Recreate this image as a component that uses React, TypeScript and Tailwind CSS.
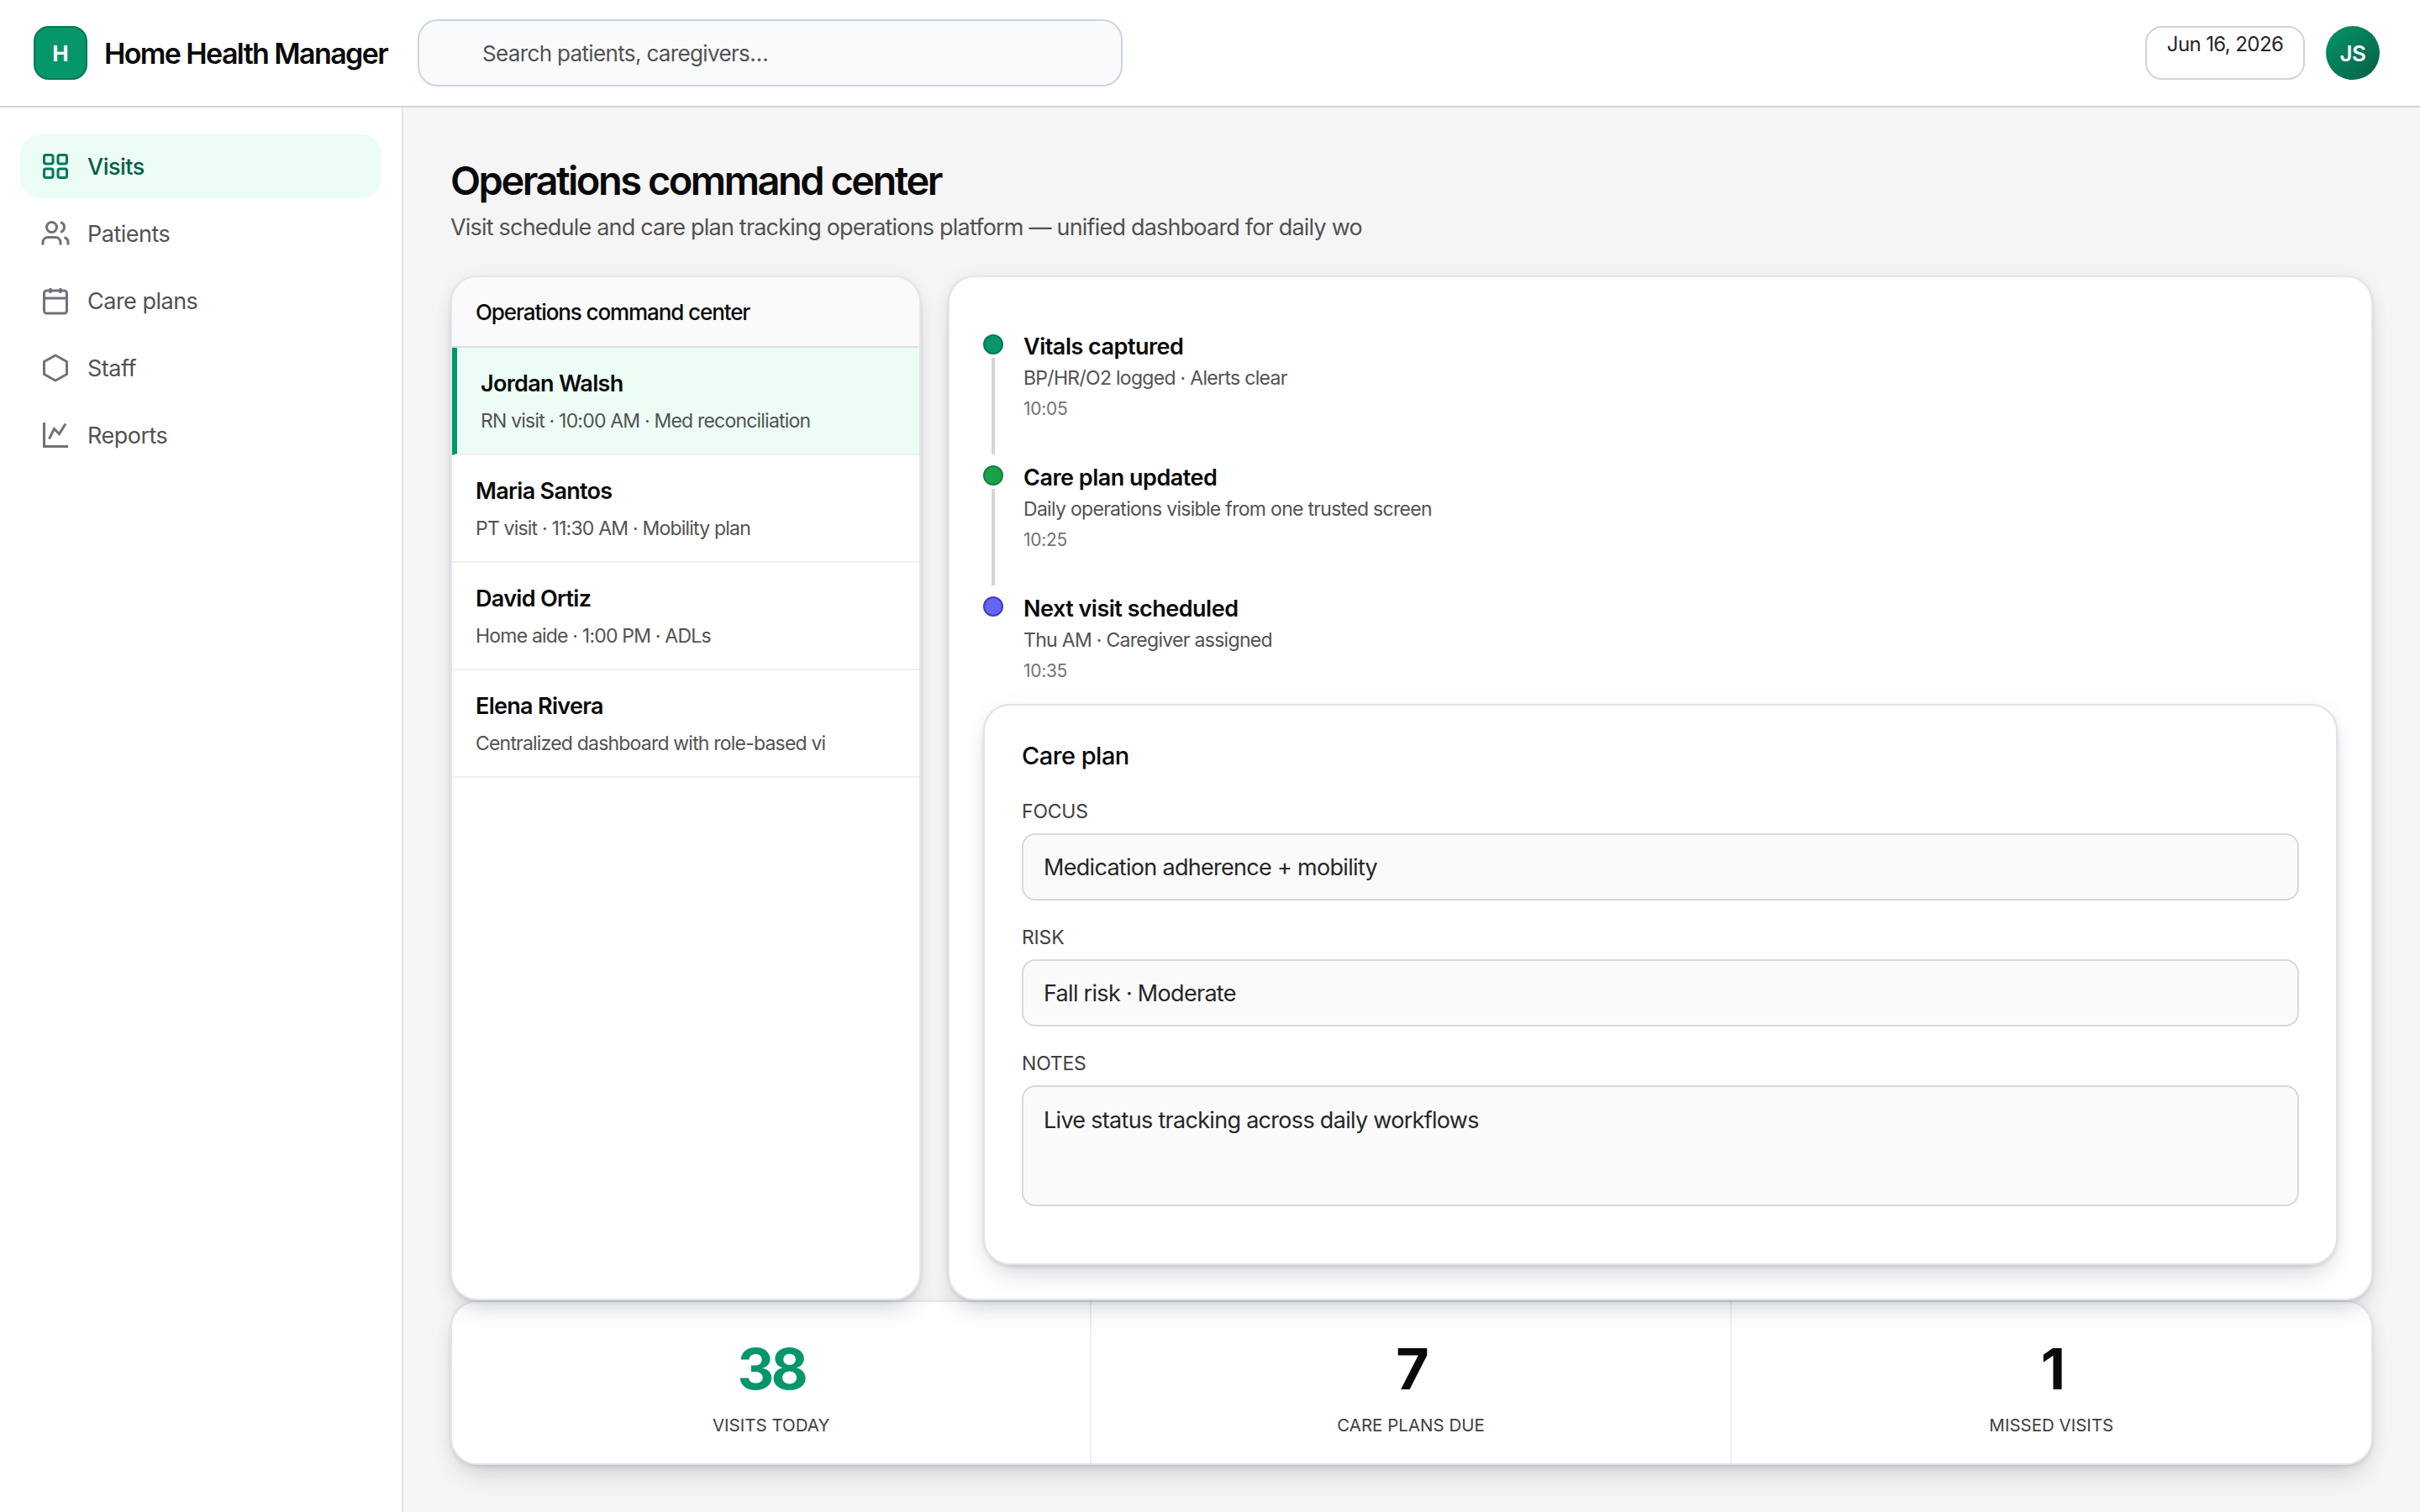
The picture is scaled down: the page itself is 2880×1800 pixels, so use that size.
import { Users, Calendar } from "lucide-react";

function GridIcon({ className }: { className?: string }) {
  return (
    <svg width="36" height="36" viewBox="0 0 24 24" fill="none" stroke="currentColor" strokeWidth="2" className={className}>
      <rect x="3" y="3" width="7" height="7" rx="1.5" />
      <rect x="14" y="3" width="7" height="7" rx="1.5" />
      <rect x="3" y="14" width="7" height="7" rx="1.5" />
      <rect x="14" y="14" width="7" height="7" rx="1.5" />
    </svg>
  );
}

function HexIcon({ className }: { className?: string }) {
  return (
    <svg width="36" height="36" viewBox="0 0 24 24" fill="none" stroke="currentColor" strokeWidth="2" strokeLinejoin="round" className={className}>
      <polygon points="12,2 21,7 21,17 12,22 3,17 3,7" />
    </svg>
  );
}

function ChartIcon({ className }: { className?: string }) {
  return (
    <svg width="36" height="36" viewBox="0 0 24 24" fill="none" stroke="currentColor" strokeWidth="2" className={className}>
      <path d="M3 2v19h19" />
      <path d="M7 15l4-8 4 4 5-8" />
    </svg>
  );
}

function UsersIcon({ className }: { className?: string }) {
  return <Users size={36} strokeWidth={2} strokeLinecap="butt" className={className} />;
}

function CalIcon({ className }: { className?: string }) {
  return <Calendar size={36} strokeWidth={2} strokeLinecap="butt" className={className} />;
}

const nav = [
  { label: "Visits", Icon: GridIcon, active: true },
  { label: "Patients", Icon: UsersIcon },
  { label: "Care plans", Icon: CalIcon },
  { label: "Staff", Icon: HexIcon },
  { label: "Reports", Icon: ChartIcon },
];

const patients = [
  { name: "Jordan Walsh", sub: "RN visit · 10:00 AM · Med reconciliation", active: true },
  { name: "Maria Santos", sub: "PT visit · 11:30 AM · Mobility plan" },
  { name: "David Ortiz", sub: "Home aide · 1:00 PM · ADLs" },
  { name: "Elena Rivera", sub: "Centralized dashboard with role-based vi" },
];

const events = [
  { title: "Vitals captured", sub: "BP/HR/O2 logged · Alerts clear", time: "10:05", dot: "bg-[#059669] border-[#047857]", line: true },
  { title: "Care plan updated", sub: "Daily operations visible from one trusted screen", time: "10:25", dot: "bg-[#16a34a] border-[#15803d]", line: true },
  { title: "Next visit scheduled", sub: "Thu AM · Caregiver assigned", time: "10:35", dot: "bg-[#6366f1] border-[#4338ca]", line: false },
];

const kpis = [
  { value: "38", label: "VISITS TODAY", color: "text-[#059669]" },
  { value: "7", label: "CARE PLANS DUE", color: "text-[#0a0a0a]" },
  { value: "1", label: "MISSED VISITS", color: "text-[#0a0a0a]" },
];

const cardShadow = "shadow-[0_2px_4px_rgba(15,23,42,0.10),0_18px_32px_-12px_rgba(15,23,42,0.20),0_0_24px_rgba(15,23,42,0.04)]";

function Field({ label, value, tall }: { label: string; value: string; tall?: boolean }) {
  return (
    <div className="flex flex-col">
      <div className="text-[23px] leading-[28px] tracking-[-0.2px] text-[#404040] uppercase mb-[12px]">{label}</div>
      <div className={`${tall ? "h-[144px] pt-[22px]" : "h-[80px] flex items-center pt-[1px]"} rounded-[16px] border-2 border-[#d8d8d8] bg-[#fafafa] px-[24px] text-[27px] leading-[36px] tracking-[-0.7px] text-[#262626]`}>
        {value}
      </div>
    </div>
  );
}

export default function App() {
  return (
    <div className="w-full h-screen flex flex-col overflow-hidden bg-[#f5f5f5] [font-family:Inter,sans-serif] text-[#0a0a0a]">
      <header className="h-[128px] shrink-0 flex items-center bg-white border-b-2 border-[#d1d5db] pl-[40px] pr-[48px]">
        <div className="w-[64px] h-[64px] rounded-[18px] bg-[#059669] border-2 border-[#047857] flex items-center justify-center text-white text-[26px] font-bold">H</div>
        <div className="ml-[20px] w-[336px] text-[34px] font-semibold tracking-[-1.6px] whitespace-nowrap">Home Health Manager</div>
        <div className="ml-[37px] w-[839px] h-[80px] rounded-[24px] border-2 border-[#cbd5e1] bg-[#f8fafc] flex items-center pl-[75px] text-[26px] tracking-[-0.65px] text-[#525252]">Search patients, caregivers…</div>
        <div className="ml-auto w-[190px] h-[64px] rounded-[20px] border-2 border-[#d4d4d4] bg-white text-center text-[24px] leading-[36px] pt-[2px] text-[#262626] tracking-[-0.6px]">Jun 16, 2026</div>
        <div className="ml-[25px] w-[64px] h-[64px] rounded-full bg-gradient-to-br from-[#059669] to-[#065f46] flex items-center justify-center text-white text-[26px] font-semibold tracking-[-0.5px]">JS</div>
      </header>
      <div className="flex-1 min-h-0 flex">
        <aside className="w-[480px] shrink-0 bg-white border-r-2 border-[#e2e4e8] pt-[32px] pl-[24px] pr-[24px] flex flex-col gap-[4px]">
          {nav.map(({ label, Icon, active }) => (
            <div key={label} className={`h-[76px] rounded-[24px] flex items-center gap-[20px] px-[24px] text-[27px] tracking-[-0.5px] ${active ? "bg-[#ecfdf5] text-[#065f46] font-medium" : "text-[#525252]"}`}>
              <Icon className={active ? "text-[#047857]" : "text-[#71717a]"} />
              <span className="pt-[2px]">{label}</span>
            </div>
          ))}
        </aside>
        <main className="flex-1 min-w-0 flex flex-col pl-[56px] pr-[56px] pt-[56px] pb-[56px]">
          <div className="h-[144px] shrink-0">
            <h1 className="pt-[1px] text-[47px] leading-[60px] font-semibold tracking-[-2.5px]">Operations command center</h1>
            <p className="mt-[6px] text-[27px] leading-[40px] tracking-[-0.8px] text-[#525252] whitespace-nowrap">Visit schedule and care plan tracking operations platform — unified dashboard for daily wo</p>
          </div>
          <div className="relative z-10 flex-1 min-h-0 grid grid-cols-[560px_1fr] gap-[32px]">
            <section className={`rounded-[32px] border-2 border-[#e2e5ec] bg-white overflow-hidden ${cardShadow}`}>
              <div className="h-[84px] flex items-center bg-[#fafafa] border-b-2 border-[#dcdfe4] px-[28px] text-[26px] font-medium tracking-[-1.1px]">Operations command center</div>
              {patients.map((p) => (
                <div key={p.name} className={`h-[128px] border-b-2 border-[#f0f0f0] pr-[28px] pt-[2px] flex flex-col justify-center whitespace-nowrap overflow-hidden ${p.active ? "bg-[#ecfdf5] border-l-[6px] border-l-[#059669] pl-[28px]" : "pl-[28px]"}`}>
                  <div className="text-[27px] leading-[40px] font-semibold tracking-[-0.7px]">{p.name}</div>
                  <div className="mt-[6px] text-[23px] leading-[36px] tracking-[-0.8px] text-[#525252]">{p.sub}</div>
                </div>
              ))}
            </section>
            <section className={`rounded-[32px] border-2 border-[#e2e5ec] bg-white p-[40px] flex flex-col ${cardShadow}`}>
              <div className="pt-[28px] shrink-0">
                {events.map((e) => (
                  <div key={e.title} className={`flex gap-[24px] ${e.line ? "h-[156px]" : "h-[113px]"}`}>
                    <div className="w-[24px] shrink-0 flex flex-col items-center">
                      <div className={`w-[24px] h-[24px] rounded-full border-2 shrink-0 ${e.dot}`} />
                      {e.line && <div className="w-[4px] flex-1 mt-[4px] mb-[13px] bg-[#d4d4d8]" />}
                    </div>
                    <div className="flex flex-col">
                      <div className="text-[27px] leading-[30px] font-semibold tracking-[-0.5px]">{e.title}</div>
                      <div className="mt-[4px] text-[23px] leading-[36px] tracking-[-0.7px] text-[#525252]">{e.sub}</div>
                      <div className="mt-[4px] text-[21px] leading-[30px] tracking-[-0.3px] text-[#737373]">{e.time}</div>
                    </div>
                  </div>
                ))}
              </div>
              <div className={`mt-[15px] flex-1 min-h-0 rounded-[32px] border-2 border-[#dfe3ea] bg-white px-[44px] pt-[42px] flex flex-col gap-[30px] ${cardShadow}`}>
                <div className="text-[29px] leading-[36px] font-medium tracking-[-0.5px] mb-[4px]">Care plan</div>
                <Field label="Focus" value="Medication adherence + mobility" />
                <Field label="Risk" value="Fall risk · Moderate" />
                <Field label="Notes" value="Live status tracking across daily workflows" tall />
              </div>
            </section>
          </div>
          <div className={`h-[196px] shrink-0 rounded-[32px] border-2 border-[#e2e5ec] bg-white grid grid-cols-3 ${cardShadow}`}>
            {kpis.map((k, i) => (
              <div key={k.label} className={`flex flex-col items-center pt-[39px] ${i < 2 ? "border-r-2 border-[#f0f0f0]" : ""}`}>
                <div className={`text-[68px] leading-[80px] font-bold tracking-[-4px] ${k.color}`}>{k.value}</div>
                <div className="mt-[14px] text-[20.5px] leading-[28px] text-[#404040]">{k.label}</div>
              </div>
            ))}
          </div>
        </main>
      </div>
    </div>
  );
}
